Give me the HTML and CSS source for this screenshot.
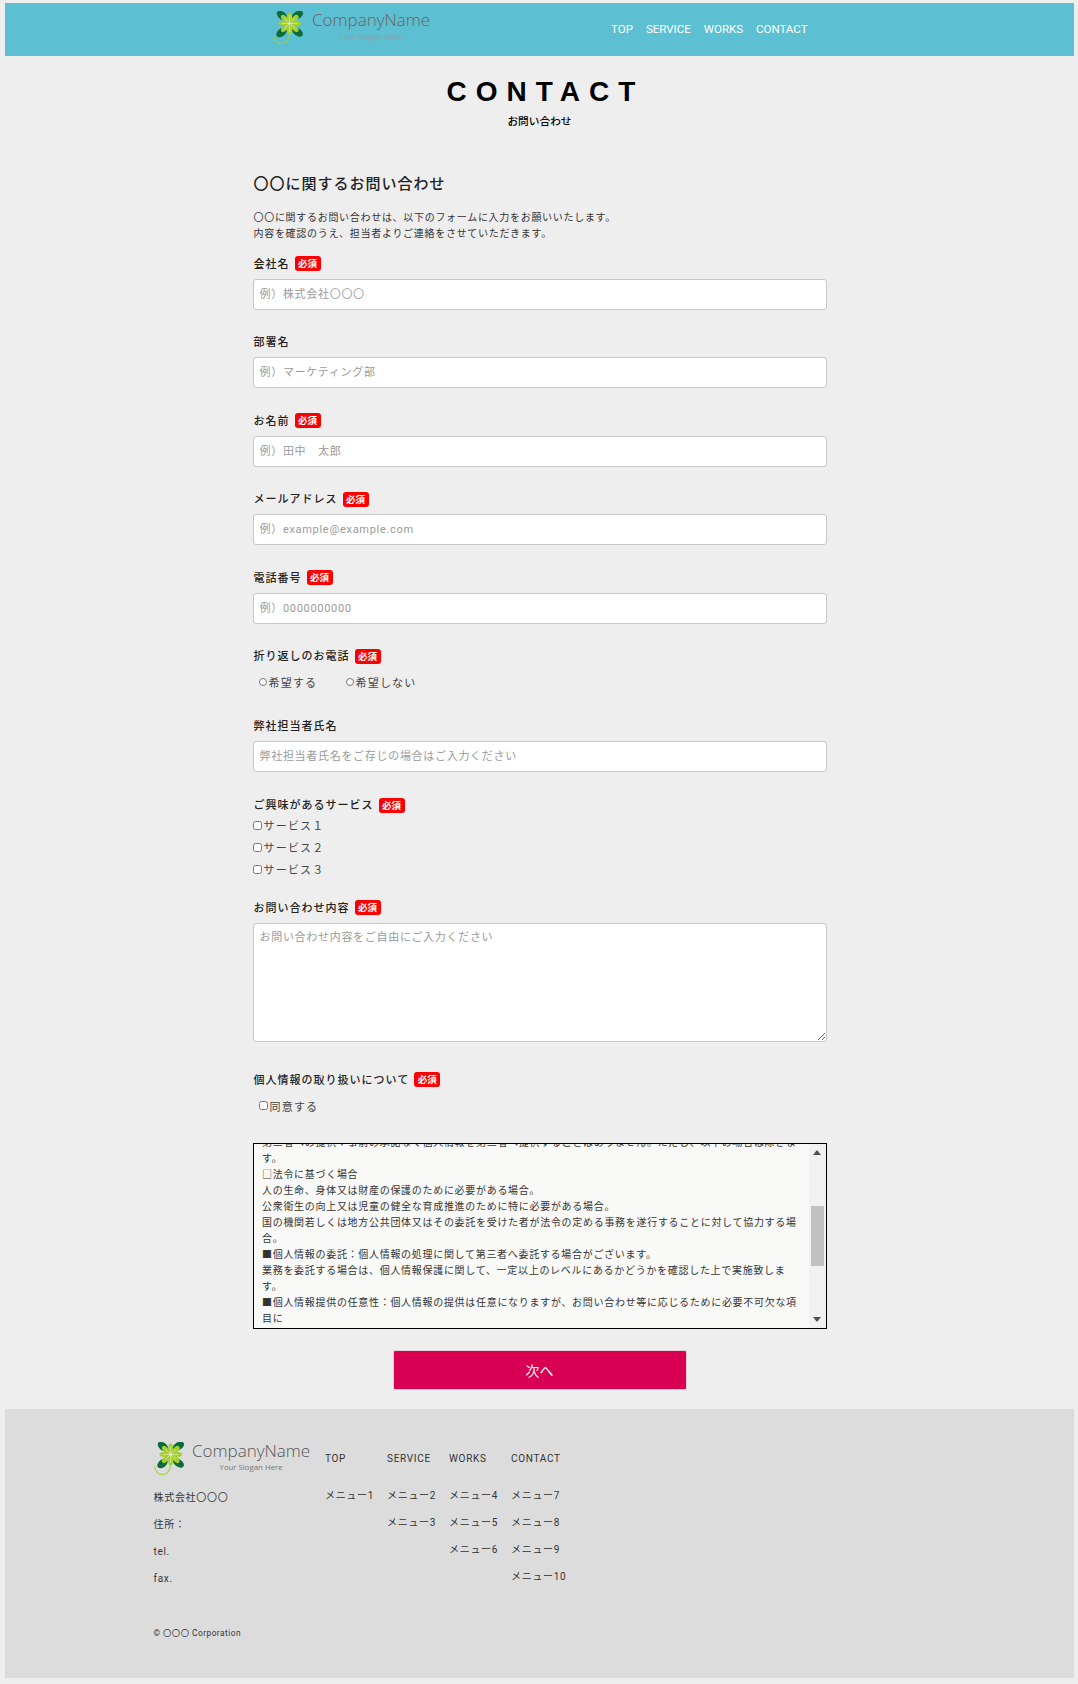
FILE: index.html
```html
<!DOCTYPE html>
<html lang="ja">
<head>
<meta charset="utf-8">
<title>CONTACT</title>
<link rel="stylesheet" href="styles.css">
</head>
<body>
<svg class="defs" width="0" height="0" aria-hidden="true">
  <symbol id="clover" viewBox="0 0 30 34">
    <g fill="#0b6b3a">
      <ellipse cx="9" cy="4.500" rx="6" ry="3.800" transform="rotate(40 9 4.500)"/>
      <ellipse cx="24.500" cy="4" rx="6" ry="3.800" transform="rotate(-30 24.500 4)"/>
      <ellipse cx="8.500" cy="21.500" rx="6" ry="3.800" transform="rotate(-40 8.500 21.500)"/>
      <ellipse cx="24.500" cy="21" rx="6" ry="3.800" transform="rotate(35 24.500 21)"/>
    </g>
    <g fill="#a4cf2e">
      <ellipse cx="12" cy="8" rx="5" ry="2.600" transform="rotate(45 12 8)"/>
      <ellipse cx="21.500" cy="8" rx="5" ry="2.600" transform="rotate(-45 21.500 8)"/>
      <ellipse cx="12" cy="17" rx="5" ry="2.600" transform="rotate(-45 12 17)"/>
      <ellipse cx="21.500" cy="17" rx="5" ry="2.600" transform="rotate(45 21.500 17)"/>
      <ellipse cx="16.700" cy="6.500" rx="2.400" ry="5"/>
      <ellipse cx="16.700" cy="18.500" rx="2.400" ry="5"/>
      <ellipse cx="10.500" cy="12.500" rx="5" ry="2.400"/>
      <ellipse cx="23" cy="12.500" rx="5" ry="2.400"/>
    </g>
    <path d="M16.700 4v17M9 12.500h15M11.500 7.500l10.500 10M22 7.500l-10.500 10" stroke="#eef5d0" stroke-width=".6" fill="none"/>
    <path d="M16.500 21c.5 6-2.500 11.500-8 11.500-4 0-7-3-8-8" fill="none" stroke="#a4cf2e" stroke-width="1.100"/>
  </symbol>
</svg>

<header class="site-header">
  <div class="header-inner">
    <a class="logo logo-top">
      <svg class="logo-mark"><use href="#clover"/></svg>
      <span class="logo-text"><span class="logo-name">CompanyName</span><span class="logo-slogan">Your Slogan Here</span></span>
    </a>
    <nav class="main-nav">
      <a>TOP</a><a>SERVICE</a><a>WORKS</a><a>CONTACT</a>
    </nav>
  </div>
</header>

<main class="content">
  <div class="page-title">
    <h1>CONTACT</h1>
    <p>お問い合わせ</p>
  </div>

  <form class="form">
    <h2>〇〇に関するお問い合わせ</h2>
    <p class="lead">〇〇に関するお問い合わせは、以下のフォームに入力をお願いいたします。<br>内容を確認のうえ、担当者よりご連絡をさせていただきます。</p>

    <div class="field">
      <label class="label">会社名<span class="req">必須</span></label>
      <input class="text" type="text" placeholder="例）株式会社〇〇〇">
    </div>
    <div class="field">
      <label class="label">部署名</label>
      <input class="text" type="text" placeholder="例）マーケティング部">
    </div>
    <div class="field">
      <label class="label">お名前<span class="req">必須</span></label>
      <input class="text" type="text" placeholder="例）田中　太郎">
    </div>
    <div class="field">
      <label class="label">メールアドレス<span class="req">必須</span></label>
      <input class="text" type="text" placeholder="例）example@example.com">
    </div>
    <div class="field">
      <label class="label">電話番号<span class="req">必須</span></label>
      <input class="text" type="text" placeholder="例）0000000000">
    </div>
    <div class="field field-radio">
      <label class="label">折り返しのお電話<span class="req">必須</span></label>
      <div class="radio-row">
        <label class="opt opt-wide"><input type="radio" name="cb">希望する</label>
        <label class="opt"><input type="radio" name="cb">希望しない</label>
      </div>
    </div>
    <div class="field">
      <label class="label">弊社担当者氏名</label>
      <input class="text" type="text" placeholder="弊社担当者氏名をご存じの場合はご入力ください">
    </div>
    <div class="field field-checks">
      <label class="label label-tight">ご興味があるサービス<span class="req">必須</span></label>
      <label class="opt opt-line"><input type="checkbox">サービス１</label>
      <label class="opt opt-line"><input type="checkbox">サービス２</label>
      <label class="opt opt-line"><input type="checkbox">サービス３</label>
    </div>
    <div class="field field-area">
      <label class="label">お問い合わせ内容<span class="req">必須</span></label>
      <textarea class="text area" placeholder="お問い合わせ内容をご自由にご入力ください"></textarea>
    </div>
    <div class="field field-agree">
      <label class="label">個人情報の取り扱いについて<span class="req">必須</span></label>
      <div class="radio-row">
        <label class="opt"><input type="checkbox">同意する</label>
      </div>
    </div>

    <div class="policy">
      <div class="policy-scroll" id="policy">
        <p>個人情報保護方針<br>当社は、お客様の個人情報を適切に取り扱うことを社会的責務と考え、以下の方針に基づき個人情報の保護に努めます。<br>■個人情報の取得：当社は、偽りその他不正の手段によらず適正に個人情報を取得いたします。<br>■個人情報の利用：当社は、個人情報を以下の利用目的の達成に必要な範囲内で利用いたします。<br>お問い合わせへの回答のため。<br>資料の送付およびご連絡のため。<br>■個人情報の管理：個人情報の漏えい、滅失又は毀損の防止その他の安全管理のために必要な措置を講じます。<br><span id="policy-anchor">第三者への提供：事前の承諾なく個人情報を第三者へ提供することはありません。ただし、以下の場合は除きます。</span><br>□法令に基づく場合<br>人の生命、身体又は財産の保護のために必要がある場合。<br>公衆衛生の向上又は児童の健全な育成推進のために特に必要がある場合。<br>国の機関若しくは地方公共団体又はその委託を受けた者が法令の定める事務を遂行することに対して協力する場合。<br>■個人情報の委託：個人情報の処理に関して第三者へ委託する場合がございます。<br>業務を委託する場合は、個人情報保護に関して、一定以上のレベルにあるかどうかを確認した上で実施致します。<br>■個人情報提供の任意性：個人情報の提供は任意になりますが、お問い合わせ等に応じるために必要不可欠な項目に<br>ついてご提供いただけない場合は、適切な対応ができないことがございます。<br>■個人情報の開示等：ご本人からの開示、訂正、削除等のご請求には、合理的な範囲で速やかに対応いたします。<br>■お問い合わせ窓口：個人情報の取り扱いに関するお問い合わせは、当社窓口までご連絡ください。<br>■継続的改善：当社は、本方針の内容を継続的に見直し、その改善に努めます。</p>
      </div>
      <div class="scrollbar" aria-hidden="true">
        <span class="sb-btn sb-up"></span>
        <span class="sb-track"><span class="sb-thumb"></span></span>
        <span class="sb-btn sb-down"></span>
      </div>
    </div>

    <div class="actions"><button type="button" class="next">次へ</button></div>
  </form>
</main>

<footer class="site-footer">
  <div class="footer-inner">
    <div class="footer-main">
      <div class="company">
        <a class="logo logo-bottom">
          <svg class="logo-mark"><use href="#clover"/></svg>
          <span class="logo-text"><span class="logo-name">CompanyName</span><span class="logo-slogan">Your Slogan Here</span></span>
        </a>
        <ul class="company-info">
          <li>株式会社〇〇〇</li>
          <li>住所：</li>
          <li>tel.</li>
          <li>fax.</li>
        </ul>
      </div>
      <div class="sitemap">
        <ul><li class="head">TOP</li><li>メニュー1</li></ul>
        <ul><li class="head">SERVICE</li><li>メニュー2</li><li>メニュー3</li></ul>
        <ul><li class="head">WORKS</li><li>メニュー4</li><li>メニュー5</li><li>メニュー6</li></ul>
        <ul><li class="head">CONTACT</li><li>メニュー7</li><li>メニュー8</li><li>メニュー9</li><li>メニュー10</li></ul>
      </div>
    </div>
    <p class="copyright">© 〇〇〇 Corporation</p>
  </div>
</footer>
<script src="app.js"></script>
</body>
</html>
```

FILE: styles.css
```css
* { box-sizing: border-box; }
html, body { padding: 0; }
body {
  margin: 3px 4px 6px 5px;
  background: #eeeeee;
  color: #333;
  font-family: Roboto, "Noto Sans CJK JP", sans-serif;
  font-size: 10px;
  letter-spacing: 0.7px;
}
.defs { position: absolute; }
p, h1, h2, ul { margin: 0; padding: 0; }
ul { list-style: none; }

.site-header { background: #5cc0d2; height: 53px; }
.header-inner {
  width: 574px;
  margin: 0 auto;
  height: 100%;
  padding: 0 19px 0 20px;
  display: flex;
  align-items: center;
  justify-content: space-between;
}
.logo { display: flex; }
.logo-mark { width: 30px; height: 34px; flex: none; }
.logo-top { margin-bottom: 3px; }
.logo-text { display: flex; flex-direction: column; align-items: center; margin: -1px 0 0 9.500px; }
.logo-name {
  font-family: "Open Sans", sans-serif;
  font-weight: 300;
  font-size: 17px;
  line-height: 20px;
  letter-spacing: 0;
}
.logo-slogan {
  font-family: "Open Sans", sans-serif;
  font-size: 7.800px;
  line-height: 11px;
  letter-spacing: 0;
  margin-top: 1px;
}
.logo-top .logo-name { color: #6a6464; }
.logo-top .logo-slogan { color: #8f9ea3; }
.logo-bottom .logo-name { color: #555; }
.logo-bottom .logo-slogan { color: #777; }
.logo-bottom .logo-text { margin-left: 8.500px; }

.main-nav { display: flex; gap: 13px; margin-bottom: 1.500px; }
.main-nav a {
  color: #fff;
  font-size: 11.500px;
  font-weight: 400;
  letter-spacing: 0;
}

.content { width: 574px; margin: 0 auto; }
.page-title { text-align: center; padding-top: 19px; height: 117px; color: #000; }
.page-title h1 {
  font-family: "Liberation Sans", sans-serif;
  font-size: 28px;
  line-height: 34px;
  font-weight: 700;
  letter-spacing: 9px;
  padding-left: 12px;
}
.page-title p { font-size: 10.700px; line-height: 16px; font-weight: 500; letter-spacing: 0; margin-top: 5px; }

.form h2 { font-size: 15px; line-height: 22px; font-weight: 500; letter-spacing: 1px; color: #222; padding-left: 1px; }
.lead { margin-top: 15px; line-height: 16px; margin-bottom: 10.500px; padding-left: 1px; }

.field { margin-bottom: 21.600px; }
.label {
  display: flex;
  align-items: center;
  height: 20px;
  margin-bottom: 6px;
  padding-left: 1px;
  font-size: 11px;
  letter-spacing: 1px;
  font-weight: 500;
  color: #222;
}
.label-tight { margin-bottom: 0; }
.req {
  margin: 2px 0 0 5px;
  width: 26px;
  height: 15px;
  border-radius: 3px;
  background: #fb0000;
  color: #fff;
  font-size: 9.500px;
  font-weight: 700;
  letter-spacing: 0;
  line-height: 15px;
  text-align: center;
}
.text {
  display: block;
  width: 100%;
  height: 31px;
  padding: 0 6px;
  background: #fff;
  border: 1px solid #c8c8c8;
  border-radius: 3px;
  font: inherit;
  font-size: 11px;
  letter-spacing: 0.700px;
  color: #333;
}
.text::placeholder { color: #9a9a9a; opacity: 1; }
.area { height: 119px; padding: 6px; line-height: 16px; }

.opt { display: flex; align-items: center; font-size: 11px; letter-spacing: 1.200px; color: #444; }
.opt input { margin: 0 2px 0 0; }
.opt input[type="radio"] { width: 8px; height: 8px; }
.opt input[type="checkbox"] { width: 9px; height: 9px; }
.radio-row { display: flex; height: 22px; align-items: center; padding-left: 6px; margin-top: 1px; }
.opt-wide { width: 87px; }
.field-radio { margin-bottom: 22px; }
.opt-line { height: 22px; }
.field-checks { margin-bottom: 16.500px; }
.field-area { margin-bottom: 27px; }
.field-agree { margin-bottom: 26px; }
.field-agree .radio-row { margin-top: 0; }

.policy {
  display: flex;
  height: 186px;
  background: #f9f9f7;
  border: 1px solid #000;
  color: #333;
}
.policy-scroll {
  position: relative;
  flex: 1;
  min-width: 0;
  padding: 0 10px 4px 8.500px;
  overflow: hidden;
  line-height: 16px;
}
.scrollbar { display: flex; flex-direction: column; width: 17px; background: #f1f1f1; }
.sb-btn { position: relative; height: 17px; flex: none; }
.sb-btn::before {
  content: "";
  position: absolute;
  left: 4.500px;
  border-left: 4px solid transparent;
  border-right: 4px solid transparent;
}
.sb-up::before { top: 6px; border-bottom: 5px solid #505050; }
.sb-down::before { top: 6px; border-top: 5px solid #505050; }
.sb-track { flex: 1; padding-top: 45px; }
.sb-thumb { display: block; height: 60px; margin: 0 2px; background: #c1c1c1; }

.actions { display: flex; justify-content: center; margin-top: 21px; }
.next {
  width: 294px;
  height: 40px;
  border: 1px solid #e4cdd6;
  border-radius: 2px;
  background: #d80052;
  color: #fff;
  font: inherit;
  font-size: 14px;
}

.site-footer { background: #dcdcdc; height: 269px; margin-top: 19px; }
.footer-inner { width: 772px; margin: 0 auto; padding-top: 31px; }
.footer-main { display: flex; }
.company { width: 171.500px; }
.logo-bottom { margin-top: 2px; }
.company-info { margin-top: 8.500px; }
.company-info li { height: 27px; line-height: 27px; }
.sitemap { display: flex; }
.sitemap ul { width: 62px; white-space: nowrap; }
.sitemap li { height: 27px; line-height: 27px; }
.sitemap li.head { margin-top: 5.500px; margin-bottom: 10px; }
.copyright { margin-top: 33.500px; font-size: 8.300px; letter-spacing: 0.500px; }
```

FILE: app.js
```js
var box = document.getElementById('policy');
box.scrollTop = document.getElementById('policy-anchor').offsetTop + 7;
```
